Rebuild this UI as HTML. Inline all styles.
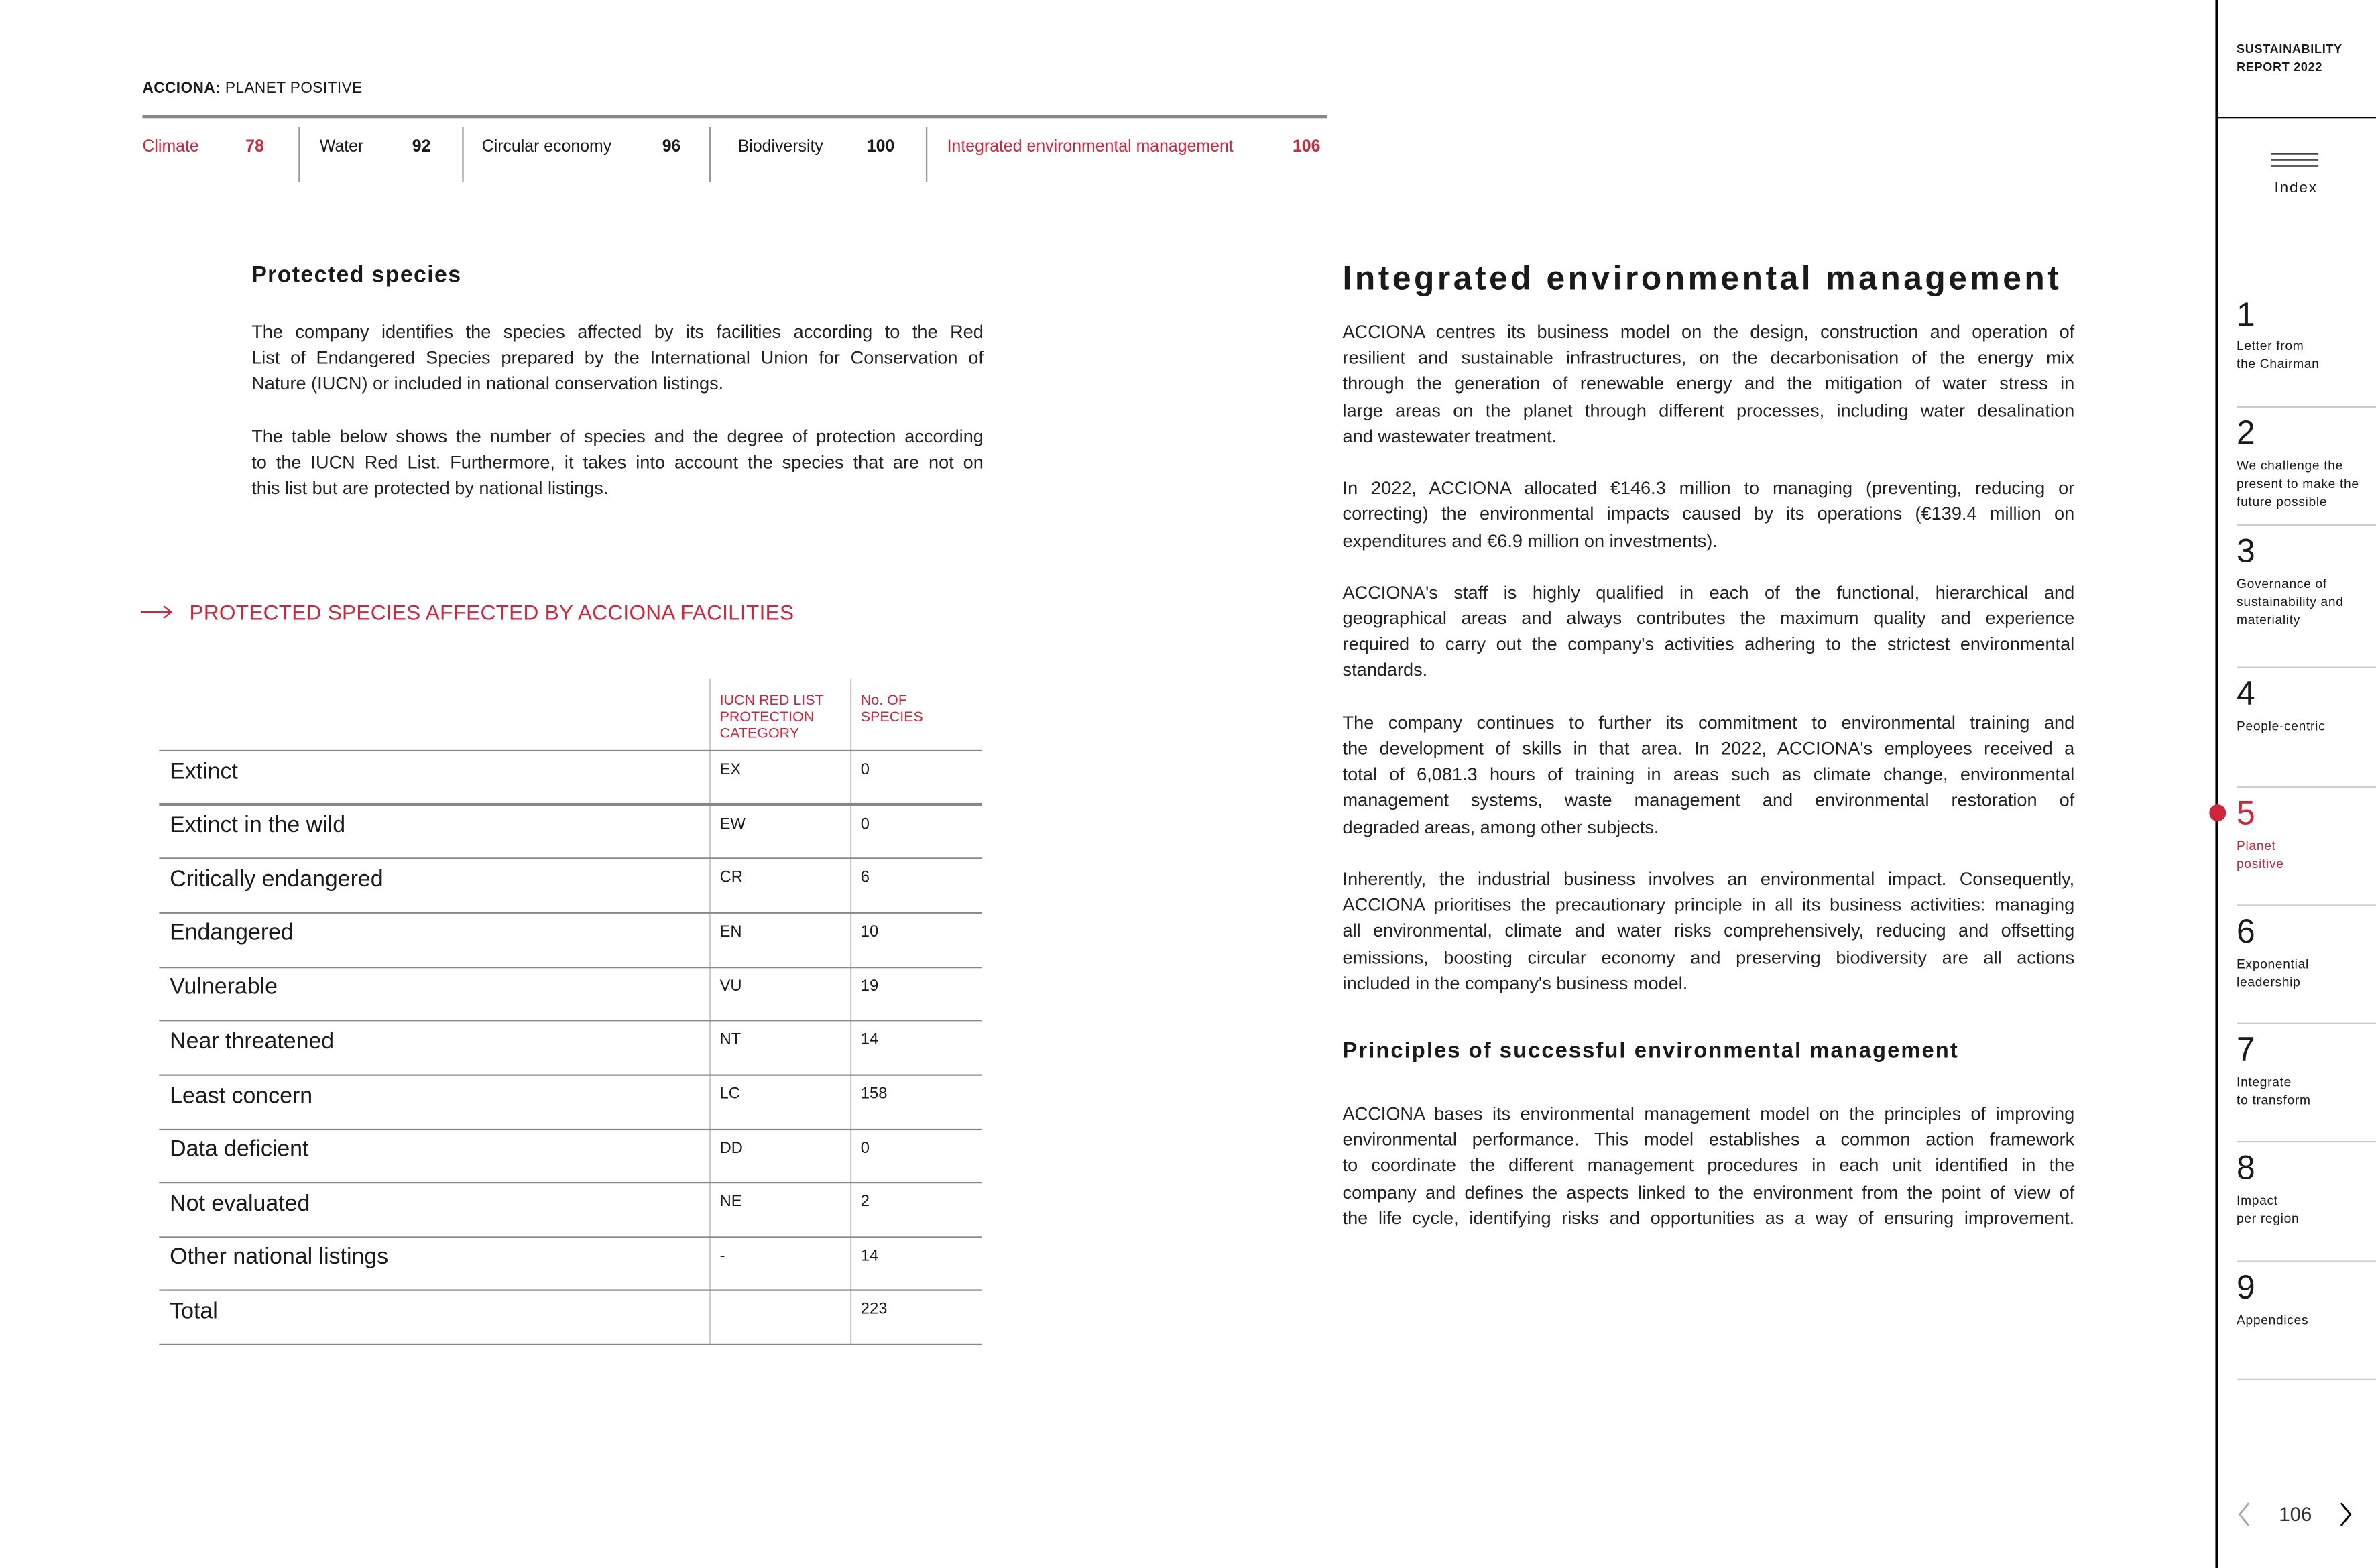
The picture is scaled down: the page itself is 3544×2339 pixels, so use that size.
<!DOCTYPE html>
<html><head><meta charset="utf-8">
<style>
html,body{margin:0;padding:0;background:#fff;width:3544px;height:2339px;overflow:hidden}
#w{position:absolute;left:0;top:0;width:1568px;height:1035px;transform:scale(2.2602);transform-origin:0 0;font-family:"Liberation Sans",sans-serif;color:#1a1a1a}
.a{position:absolute;white-space:nowrap}
.red{color:#d0253a}
.j div{text-align:justify;text-align-last:justify;white-space:nowrap;height:17.2px;line-height:17.2px}
.j div.l{text-align-last:left}
.j{position:absolute;font-size:12px;color:#222}
.vs{position:absolute;width:1px;background:#999;top:84px;height:36px}
.hl{position:absolute;height:1px;background:#888;left:105px;width:543px}
.lab{position:absolute;left:112px;font-size:15px}
.c1{position:absolute;left:475px;font-size:10.5px}
.c2{position:absolute;left:568px;font-size:10.5px}
.num{position:absolute;left:1476px;font-size:22px;font-weight:300;line-height:22px}
.sl{position:absolute;left:1476px;font-size:8.5px;line-height:12px;letter-spacing:.3px}
.sep{position:absolute;left:1476px;width:92px;height:1px;background:#ccc}
</style></head><body><div id="w">

<div class="a" style="left:94px;top:53px;font-size:10px;letter-spacing:.2px"><b>ACCIONA:</b> PLANET POSITIVE</div>
<div class="a" style="left:94px;top:76px;width:782px;height:1.5px;background:#888"></div>

<div class="a red" style="left:94px;top:91px;font-size:11px">Climate</div>
<div class="a red" style="left:162px;top:91px;font-size:11px;font-weight:bold">78</div>
<div class="vs" style="left:197px"></div>
<div class="a" style="left:211px;top:91px;font-size:11px">Water</div>
<div class="a" style="left:272px;top:91px;font-size:11px;font-weight:bold">92</div>
<div class="vs" style="left:305px"></div>
<div class="a" style="left:318px;top:91px;font-size:11px">Circular economy</div>
<div class="a" style="left:437px;top:91px;font-size:11px;font-weight:bold">96</div>
<div class="vs" style="left:468px"></div>
<div class="a" style="left:487px;top:91px;font-size:11px">Biodiversity</div>
<div class="a" style="left:572px;top:91px;font-size:11px;font-weight:bold">100</div>
<div class="vs" style="left:611px"></div>
<div class="a red" style="left:625px;top:91px;font-size:11px">Integrated environmental management</div>
<div class="a red" style="left:853px;top:91px;font-size:11px;font-weight:bold">106</div>

<div class="a" style="left:166px;top:173px;font-size:15px;font-weight:bold;letter-spacing:.6px">Protected species</div>
<div class="j" style="left:166px;top:211px;width:483px">
<div>The company identifies the species affected by its facilities according to the Red</div>
<div>List of Endangered Species prepared by the International Union for Conservation of</div>
<div class="l">Nature (IUCN) or included in national conservation listings.</div>
<div class="l"></div>
<div>The table below shows the number of species and the degree of protection according</div>
<div>to the IUCN Red List. Furthermore, it takes into account the species that are not on</div>
<div class="l">this list but are protected by national listings.</div>
</div>

<svg class="a" style="left:93px;top:399px" width="22" height="10"><path d="M0 5H20M15 1L20 5L15 9" stroke="#d0253a" fill="none" stroke-width="1"/></svg>
<div class="a red" style="left:125px;top:396px;font-size:14px;letter-spacing:.1px">PROTECTED SPECIES AFFECTED BY ACCIONA FACILITIES</div>

<div class="a" style="left:468px;top:448px;width:1px;height:439px;background:#ccc"></div>
<div class="a" style="left:561px;top:448px;width:1px;height:439px;background:#ccc"></div>
<div class="a red" style="left:475px;top:458px;font-size:9.5px;line-height:10.8px">IUCN RED LIST<br>PROTECTION<br>CATEGORY</div>
<div class="a red" style="left:568px;top:458px;font-size:9.5px;line-height:10.8px">No. OF<br>SPECIES</div>

<div class="hl" style="top:495px"></div>
<div class="lab" style="top:501px">Extinct</div><div class="c1" style="top:502px">EX</div><div class="c2" style="top:502px">0</div>
<div class="hl" style="top:530px;height:1.5px"></div>
<div class="lab" style="top:536px">Extinct in the wild</div><div class="c1" style="top:538px">EW</div><div class="c2" style="top:538px">0</div>
<div class="hl" style="top:566px"></div>
<div class="lab" style="top:572px">Critically endangered</div><div class="c1" style="top:573px">CR</div><div class="c2" style="top:573px">6</div>
<div class="hl" style="top:602px"></div>
<div class="lab" style="top:607px">Endangered</div><div class="c1" style="top:609px">EN</div><div class="c2" style="top:609px">10</div>
<div class="hl" style="top:638px"></div>
<div class="lab" style="top:643px">Vulnerable</div><div class="c1" style="top:645px">VU</div><div class="c2" style="top:645px">19</div>
<div class="hl" style="top:673px"></div>
<div class="lab" style="top:679px">Near threatened</div><div class="c1" style="top:680px">NT</div><div class="c2" style="top:680px">14</div>
<div class="hl" style="top:709px"></div>
<div class="lab" style="top:715px">Least concern</div><div class="c1" style="top:716px">LC</div><div class="c2" style="top:716px">158</div>
<div class="hl" style="top:745px"></div>
<div class="lab" style="top:750px">Data deficient</div><div class="c1" style="top:752px">DD</div><div class="c2" style="top:752px">0</div>
<div class="hl" style="top:780px"></div>
<div class="lab" style="top:786px">Not evaluated</div><div class="c1" style="top:787px">NE</div><div class="c2" style="top:787px">2</div>
<div class="hl" style="top:816px"></div>
<div class="lab" style="top:821px">Other national listings</div><div class="c1" style="top:823px">-</div><div class="c2" style="top:823px">14</div>
<div class="hl" style="top:851px"></div>
<div class="lab" style="top:857px">Total</div><div class="c2" style="top:858px">223</div>
<div class="hl" style="top:887px"></div>

<div class="a" style="left:886px;top:171px;font-size:22px;letter-spacing:2px;font-weight:bold">Integrated environmental management</div>
<div class="j" style="left:886px;top:211px;width:483px">
<div>ACCIONA centres its business model on the design, construction and operation of</div>
<div>resilient and sustainable infrastructures, on the decarbonisation of the energy mix</div>
<div>through the generation of renewable energy and the mitigation of water stress in</div>
<div>large areas on the planet through different processes, including water desalination</div>
<div class="l">and wastewater treatment.</div>
<div class="l"></div>
<div>In 2022, ACCIONA allocated €146.3 million to managing (preventing, reducing or</div>
<div>correcting) the environmental impacts caused by its operations (€139.4 million on</div>
<div class="l">expenditures and €6.9 million on investments).</div>
<div class="l"></div>
<div>ACCIONA's staff is highly qualified in each of the functional, hierarchical and</div>
<div>geographical areas and always contributes the maximum quality and experience</div>
<div>required to carry out the company's activities adhering to the strictest environmental</div>
<div class="l">standards.</div>
<div class="l"></div>
<div>The company continues to further its commitment to environmental training and</div>
<div>the development of skills in that area. In 2022, ACCIONA's employees received a</div>
<div>total of 6,081.3 hours of training in areas such as climate change, environmental</div>
<div>management systems, waste management and environmental restoration of</div>
<div class="l">degraded areas, among other subjects.</div>
<div class="l"></div>
<div>Inherently, the industrial business involves an environmental impact. Consequently,</div>
<div>ACCIONA prioritises the precautionary principle in all its business activities: managing</div>
<div>all environmental, climate and water risks comprehensively, reducing and offsetting</div>
<div>emissions, boosting circular economy and preserving biodiversity are all actions</div>
<div class="l">included in the company's business model.</div>
</div>
<div class="a" style="left:886px;top:686px;font-size:14.5px;font-weight:bold;letter-spacing:.9px">Principles of successful environmental management</div>
<div class="j" style="left:886px;top:727px;width:483px">
<div>ACCIONA bases its environmental management model on the principles of improving</div>
<div>environmental performance. This model establishes a common action framework</div>
<div>to coordinate the different management procedures in each unit identified in the</div>
<div>company and defines the aspects linked to the environment from the point of view of</div>
<div>the life cycle, identifying risks and opportunities as a way of ensuring improvement.</div>
</div>

<!-- sidebar -->
<div class="a" style="left:1462px;top:0;width:2px;height:1035px;background:#000"></div>
<div class="a" style="left:1476px;top:27px;font-size:8px;font-weight:bold;line-height:12px;letter-spacing:.3px">SUSTAINABILITY<br>REPORT 2022</div>
<div class="a" style="left:1463px;top:77px;width:105px;height:1px;background:#000"></div>
<div class="a" style="left:1499px;top:101px;width:31px;height:1px;background:#000"></div>
<div class="a" style="left:1499px;top:105px;width:31px;height:1px;background:#000"></div>
<div class="a" style="left:1499px;top:109px;width:31px;height:1px;background:#000"></div>
<div class="a" style="left:1501px;top:119px;font-size:10px;letter-spacing:.8px">Index</div>

<div class="num" style="top:197px">1</div><div class="sl" style="top:222px">Letter from<br>the Chairman</div>
<div class="sep" style="top:268px"></div>
<div class="num" style="top:275px">2</div><div class="sl" style="top:301px">We challenge the<br>present to make the<br>future possible</div>
<div class="sep" style="top:346px"></div>
<div class="num" style="top:353px">3</div><div class="sl" style="top:379px">Governance of<br>sustainability and<br>materiality</div>
<div class="sep" style="top:440px"></div>
<div class="num" style="top:447px">4</div><div class="sl" style="top:473px">People-centric</div>
<div class="sep" style="top:519px"></div>
<div class="num red" style="top:526px">5</div><div class="sl red" style="top:552px">Planet<br>positive</div>
<div class="a" style="left:1458px;top:531px;width:11px;height:11px;border-radius:50%;background:#d0253a"></div>
<div class="sep" style="top:597px"></div>
<div class="num" style="top:604px">6</div><div class="sl" style="top:630px">Exponential<br>leadership</div>
<div class="sep" style="top:675px"></div>
<div class="num" style="top:682px">7</div><div class="sl" style="top:708px">Integrate<br>to transform</div>
<div class="sep" style="top:753px"></div>
<div class="num" style="top:760px">8</div><div class="sl" style="top:786px">Impact<br>per region</div>
<div class="sep" style="top:832px"></div>
<div class="num" style="top:839px">9</div><div class="sl" style="top:865px">Appendices</div>
<div class="sep" style="top:910px"></div>

<svg class="a" style="left:1476px;top:991px" width="10" height="17"><path d="M8 1L2 8.5L8 16" stroke="#aaa" fill="none" stroke-width="1.3"/></svg>
<div class="a" style="left:1504px;top:992px;font-size:13px;color:#333">106</div>
<svg class="a" style="left:1543px;top:991px" width="10" height="17"><path d="M2 1L8 8.5L2 16" stroke="#000" fill="none" stroke-width="1.3"/></svg>

</div></body></html>
